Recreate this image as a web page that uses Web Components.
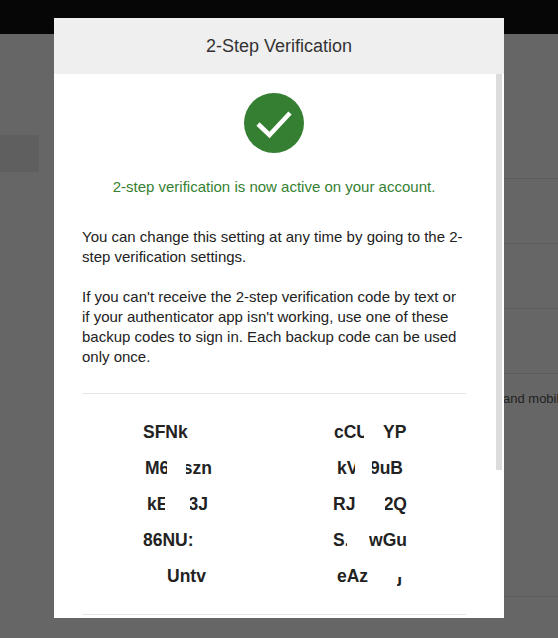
<!DOCTYPE html>
<html>
<head>
<meta charset="utf-8">
<title>2-Step Verification</title>
<style>
html, body { margin: 0; height: 100%; overflow: hidden; background: #666; font-family: "Liberation Sans", Arial, sans-serif; }
</style>
</head>
<body>
<account-backdrop>
  <verify-dialog heading="2-Step Verification">
    <success-mark>2-step verification is now active on your account.</success-mark>
    <p>You can change this setting at any time by going to the 2-step verification settings.</p>
    <p>If you can't receive the 2-step verification code by text or if your authenticator app isn't working, use one of these backup codes to sign in. Each backup code can be used only once.</p>
    <backup-codes></backup-codes>
  </verify-dialog>
</account-backdrop>
<script>
class AccountBackdrop extends HTMLElement {
    constructor() {
        super();
        this.attachShadow({ mode: 'open' });
    }

    connectedCallback() {
        this.shadowRoot.innerHTML = `
            <style>
                :host { display: block; width: 558px; height: 638px; overflow: hidden; position: relative; }
                .topbar { height: 34px; background: #060606; }
                .page { display: flex; height: 604px; }
                .side { width: 39px; flex: none; padding-top: 101px; }
                .side div { height: 37px; background: #5f5f5f; }
                .main { flex: 1; padding: 144px 0 0 0; display: flex; justify-content: flex-end; }
                .rows { width: 55px; color: #222; font-size: 13px; }
                .row { height: 64px; border-top: 1px solid #5c5c5c; white-space: nowrap; }
                .row span { display: block; margin-top: 17px; }
                .row.tall { height: 222px; }
                .dialog { position: absolute; left: 54px; top: 18px; }
            </style>
            <div class="topbar"></div>
            <div class="page">
                <div class="side"><div></div></div>
                <div class="main">
                    <div class="rows">
                        <div class="row"></div>
                        <div class="row"></div>
                        <div class="row"></div>
                        <div class="row tall"><span>and mobil</span></div>
                        <div class="row"></div>
                    </div>
                </div>
            </div>
            <div class="dialog"><slot></slot></div>
        `;
    }
}

class VerifyDialog extends HTMLElement {
    constructor() {
        super();
        this.attachShadow({ mode: 'open' });
    }

    connectedCallback() {
        this.shadowRoot.innerHTML = `
            <style>
                :host { display: block; width: 450px; height: 600px; background: #fff; overflow: hidden; }
                .head { height: 56px; background: #efefef; color: #333; font-size: 18px; display: flex; align-items: center; justify-content: center; }
                .body { display: flex; height: 544px; }
                .content { width: 384px; padding: 0 26px 0 28px; font-size: 15px; line-height: 20px; color: #222; flex: none; }
                .track { width: 6px; height: 396px; background: #dcdcdc; margin-left: 4px; }
                ::slotted(p) { margin: 0 0 20px; }
            </style>
            <div class="head">${this.getAttribute('heading')}</div>
            <div class="body">
                <div class="content"><slot></slot></div>
                <div class="track"></div>
            </div>
        `;
    }
}

class SuccessMark extends HTMLElement {
    constructor() {
        super();
        this.attachShadow({ mode: 'open' });
    }

    connectedCallback() {
        this.shadowRoot.innerHTML = `
            <style>
                :host { display: block; padding-top: 19px; margin-bottom: 30px; text-align: center; color: #357f32; }
                svg { display: block; margin: 0 auto 24px; }
            </style>
            <svg width="60" height="60" viewBox="0 0 60 60">
                <circle cx="30" cy="30" r="30" fill="#357f32"/>
                <path d="M14 31 L25.5 42 L46 20" fill="none" stroke="#fff" stroke-width="4.5"/>
            </svg>
            <slot></slot>
        `;
    }
}

class BackupCodes extends HTMLElement {
    constructor() {
        super();
        this.attachShadow({ mode: 'open' });
    }

    connectedCallback() {
        // parts of each code are painted out in the source, so each cell lists
        // its visible pieces: [left, right, text, keep right side, clip from top]
        const codes = [
            [[61, 107, 'SFNk']], [[60, 90, 'cCU'], [109, 133, 'YP']],
            [[63, 85, 'M6'], [104, 130, 'szn', 1]], [[63, 81, 'kV'], [98, 129, '9uB', 1]],
            [[65, 83, 'kE'], [108, 126, '3J', 1]], [[59, 83, 'RJ'], [111, 133, '2Q', 1]],
            [[61, 111, '86NU:']], [[59, 73, 'S.'], [95, 133, 'wGu', 1]],
            [[85, 125, 'Untv']], [[63, 95, 'eAz'], [123, 128, 'j', 1, 12]]
        ];
        const cells = codes.map(pieces => {
            let end = 0;
            const html = pieces.map(([l, r, text, right, top]) => {
                const gap = l - end;
                end = r;
                return `<span class="${right ? 'right' : ''}" style="margin-left:${gap}px;width:${r - l}px;clip-path:inset(${top || 0}px 0 0 0)">${text}</span>`;
            }).join('');
            return `<div class="cell">${html}</div>`;
        }).join('');
        this.shadowRoot.innerHTML = `
            <style>
                :host { display: block; border-top: 1px solid #e6e6e6; border-bottom: 1px solid #e6e6e6; padding: 27px 0; margin-top: 26px; }
                .grid { display: grid; grid-template-columns: 192px 192px; row-gap: 14px; font-size: 17.5px; line-height: 22px; font-weight: bold; color: #222; }
                .cell { display: flex; height: 22px; }
                span { flex: none; display: flex; white-space: nowrap; }
                span.right { justify-content: flex-end; }
            </style>
            <div class="grid">${cells}</div>
        `;
    }
}

customElements.define('account-backdrop', AccountBackdrop);
customElements.define('verify-dialog', VerifyDialog);
customElements.define('success-mark', SuccessMark);
customElements.define('backup-codes', BackupCodes);
</script>
</body>
</html>
